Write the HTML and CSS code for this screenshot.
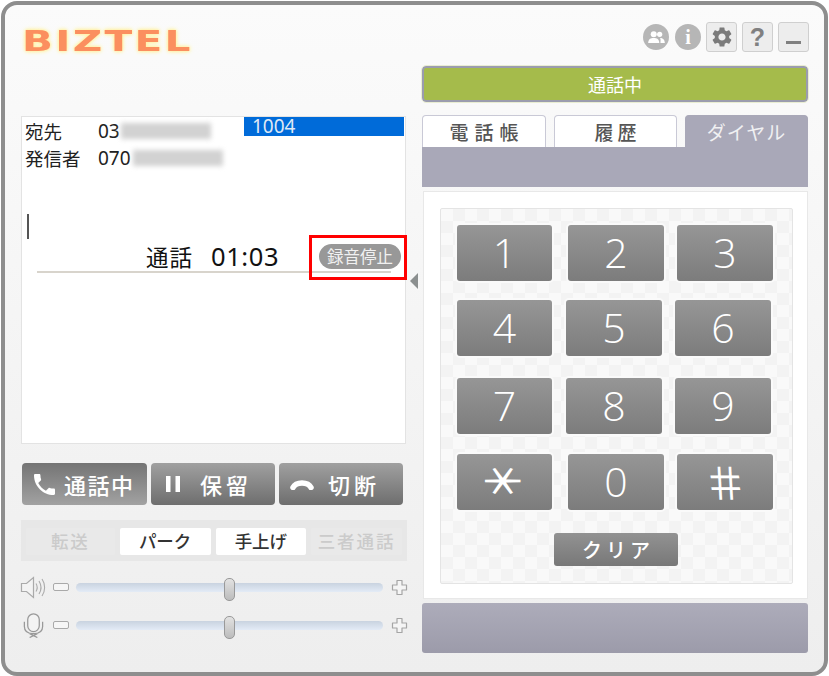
FILE: index.html
```html
<!DOCTYPE html>
<html lang="ja">
<head>
<meta charset="utf-8">
<title>BIZTEL</title>
<link rel="stylesheet" href="styles.css">
</head>
<body>
<div class="window">
  <div class="left">
    <div class="logo">BIZTEL</div>
    <div class="call-panel">
      <div class="info-row first">
        <div class="info-text"><span class="label">宛先</span><span class="num">03</span><span class="blur b1"></span></div>
        <div class="ext">1004</div>
      </div>
      <div class="info-row">
        <div class="info-text"><span class="label">発信者</span><span class="num">070</span><span class="blur b2"></span></div>
      </div>
      <div class="cursor"></div>
      <div class="call-row">
        <span class="call-state">通話</span><span class="call-time">01:03</span>
        <span class="rec">録音停止</span>
      </div>
      <div class="call-line"></div>
      <div class="red-box"></div>
    </div>
    <div class="actions">
      <div class="act active"><svg class="ic-phone" viewBox="3 3 18 18"><path d="M6.62 10.79c1.44 2.83 3.76 5.14 6.59 6.59l2.2-2.2c.27-.27.67-.36 1.02-.24 1.12.37 2.33.57 3.57.57.55 0 1 .45 1 1V20c0 .55-.45 1-1 1-9.39 0-17-7.61-17-17 0-.55.45-1 1-1h3.5c.55 0 1 .45 1 1 0 1.25.2 2.45.57 3.57.11.35.03.74-.25 1.02l-2.2 2.2z"/></svg><span>通話中</span></div>
      <div class="act hold"><svg class="ic-pause" viewBox="0 0 14 16"><rect x="0" y="0" width="4.500" height="16"/><rect x="9.500" y="0" width="4.500" height="16"/></svg><span class="wide">保留</span></div>
      <div class="act hang"><svg class="ic-hang" viewBox="0 0 24 11"><path d="M3 8.500C6 2.500 18 2.500 21 8.500" fill="none" stroke="#fff" stroke-width="5.500" stroke-linecap="round"/></svg><span class="wide">切断</span></div>
    </div>
    <div class="tools">
      <div class="tool off first-tool">転送</div>
      <div class="tool on">パーク</div>
      <div class="tool on">手上げ</div>
      <div class="tool off">三者通話</div>
    </div>
    <div class="slider-row">
      <svg class="vol-ic" viewBox="0 0 27 24"><path d="M1.500 8h5l7-6v20l-7-6h-5z" fill="#f3f3f3" stroke="#aaa" stroke-width="1.200"/><path d="M16 8c1.500 2.500 1.500 5.500 0 8M19 5.500c2.500 4 2.500 9 0 13M22 3.500c3.500 5 3.500 12 0 17" fill="none" stroke="#aaa" stroke-width="1.100"/></svg>
      <div class="minus"></div>
      <div class="track"><div class="thumb"></div></div>
      <svg class="plus" viewBox="0 0 17 17"><path d="M6 1.500h5v4.500h4.500v5H11v4.500H6V11H1.500V6H6z" fill="#f5f5f5" stroke="#a5a5a5" stroke-width="1.200" stroke-linejoin="round"/></svg>
    </div>
    <div class="slider-row">
      <svg class="vol-ic" viewBox="0 0 27 26"><rect x="7.500" y="0.800" width="12" height="18.500" rx="6" fill="#f3f3f3" stroke="#999" stroke-width="1.300"/><path d="M4 9v5c0 5 4 7.500 9.500 7.500S23 19 23 14V9M9.500 25.500l8-4M17.500 25.500l-8-4" fill="none" stroke="#999" stroke-width="1.300"/></svg>
      <div class="minus"></div>
      <div class="track"><div class="thumb"></div></div>
      <svg class="plus" viewBox="0 0 17 17"><path d="M6 1.500h5v4.500h4.500v5H11v4.500H6V11H1.500V6H6z" fill="#f5f5f5" stroke="#a5a5a5" stroke-width="1.200" stroke-linejoin="round"/></svg>
    </div>
  </div>
  <div class="right">
    <div class="top-icons">
      <div class="circle"><svg viewBox="0 0 24 24"><circle cx="8.500" cy="8" r="3.800" fill="#fff"/><circle cx="16" cy="8" r="3.300" fill="#fff"/><path d="M1.500 19c0-5 3-6.500 7-6.500s7 1.500 7 6.500z" fill="#fff"/><path d="M17 19h5.500c0-4.500-2.500-6.500-6-6.500 1 1.500.5 4 .5 6.500z" fill="#fff"/></svg></div>
      <div class="circle info">i</div>
      <div class="square first"><svg viewBox="0 0 24 24"><path fill="#7b7b7b" d="M19.140 12.940c.04-.3.06-.61.06-.94 0-.32-.02-.64-.07-.94l2.030-1.580a.49.49 0 0 0 .12-.61l-1.920-3.320a.488.488 0 0 0-.59-.22l-2.390.96c-.5-.38-1.030-.7-1.620-.94l-.36-2.540a.484.484 0 0 0-.48-.41h-3.840c-.24 0-.43.17-.47.41l-.36 2.540c-.59.24-1.130.57-1.620.94l-2.390-.96c-.22-.08-.47 0-.59.22L2.740 8.870c-.12.21-.08.47.12.61l2.030 1.580c-.05.3-.09.63-.09.94s.02.64.07.94l-2.030 1.580a.49.49 0 0 0-.12.61l1.920 3.320c.12.22.37.29.59.22l2.390-.96c.5.38 1.030.7 1.620.94l.36 2.540c.05.24.24.41.48.41h3.840c.24 0 .44-.17.47-.41l.36-2.540c.59-.24 1.130-.56 1.620-.94l2.390.96c.22.08.47 0 .59-.22l1.920-3.320c.12-.22.07-.47-.12-.61l-2.010-1.580zM12 15.600c-1.980 0-3.600-1.620-3.600-3.600s1.620-3.600 3.600-3.600 3.600 1.620 3.600 3.600-1.620 3.600-3.600 3.600z"/></svg></div>
      <div class="square help">?</div>
      <div class="square"><div class="dash"></div></div>
    </div>
    <div class="status">通話中</div>
    <div class="tabs">
      <div class="tab sp1">電話帳</div>
      <div class="tab sp2">履歴</div>
      <div class="tab sel">ダイヤル</div>
    </div>
    <div class="tab-band"></div>
    <div class="dial-panel">
      <div class="keypad">
        <div class="key-row"><div class="key">1</div><div class="key mid-a">2</div><div class="key">3</div></div>
        <div class="key-row r2"><div class="key">4</div><div class="key">5</div><div class="key">6</div></div>
        <div class="key-row r3"><div class="key">7</div><div class="key">8</div><div class="key">9</div></div>
        <div class="key-row r4"><div class="key"><span class="star">＊</span></div><div class="key mid-a">0</div><div class="key"><span class="hash">＃</span></div></div>
        <div class="clear">クリア</div>
      </div>
    </div>
    <div class="footer-band"></div>
  </div>
  <div class="handle"></div>
</div>
</body>
</html>
```
FILE: styles.css
```css
* { box-sizing: border-box; }
html, body { margin: 0; padding: 0; background: #fff; }
body { width: 829px; height: 676px; overflow: hidden; font-family: "Noto Sans CJK JP", "Noto Sans", sans-serif; }

.window {
  position: relative;
  display: flex;
  gap: 16px;
  width: 827px;
  height: 675px;
  margin: 1px 0 0 1px;
  padding-left: 16px;
  border: 4px solid #8e8e8e;
  border-radius: 16px;
  background: linear-gradient(#fbfbfb, #eeeeee);
}

.left { width: 385px; flex: none; }
.right { width: 387px; flex: none; }

.logo {
  height: 28px;
  margin-top: 23px;
  margin-bottom: 60px;
  margin-left: 1px;
  font-family: "DejaVu Sans", sans-serif;
  font-weight: 700;
  font-size: 28px;
  line-height: 28px;
  letter-spacing: 1.600px;
  color: #fb8f5f;
  text-shadow: 0 0 2px #fff3b0, 0 0 3px #fff0a0, 0 0 4px #fff0a0;
  transform: scaleX(1.45);
  transform-origin: left center;
}

.call-panel {
  position: relative;
  height: 328px;
  background: #fff;
  border: 1px solid #e3e3e3;
  color: #222;
}
.info-row { display: flex; height: 24px; font-size: 18.500px; line-height: 24px; }
.info-row.first { height: 28px; }
.info-row.first .info-text { padding-top: 3px; }
.info-text { width: 222px; flex: none; display: flex; align-items: center; height: 25px; padding-left: 3px; }
.label { width: 73px; flex: none; }
.num { font-family: "Noto Sans", sans-serif; font-size: 19px; }
.blur { display: block; height: 16px; background: #d2d2d2; filter: blur(2.500px); }
.b1 { width: 90px; margin-left: 1px; }
.b2 { width: 90px; margin-left: 2px; }
.ext {
  flex: 1;
  height: 19px;
  margin-right: 1px;
  padding-left: 8px;
  background: #006bd9;
  color: #dfe8f5;
  font-family: "Noto Sans", sans-serif;
  font-size: 19px;
  line-height: 19px;
}
.cursor { width: 2px; height: 25px; margin: 45px 0 0 5px; background: #555; }
.call-row { display: flex; align-items: center; height: 25px; margin-top: 5px; padding-left: 124px; padding-bottom: 2px; color: #111; font-size: 22.500px; }
.call-state { width: 65px; flex: none; letter-spacing: 1px; }
.call-time { width: 108px; flex: none; font-family: "Noto Sans", sans-serif; font-size: 25.500px; letter-spacing: .6px; }
.rec {
  width: 82px;
  height: 25px;
  margin-top: 2px;
  border-radius: 13px;
  background: #989898;
  color: #f1f1f1;
  font-size: 16.500px;
  line-height: 25px;
  text-align: center;
}
.call-line { height: 2px; margin: 2px 14px 0 15px; background: #d8d4cc; }
.red-box { position: absolute; left: 287px; top: 118px; width: 98px; height: 45px; border: 3px solid #f00; }

.actions { display: flex; gap: 4px; margin-top: 19px; margin-left: 1px; height: 42px; }
.act {
  width: 124px;
  display: flex;
  align-items: center;
  border-radius: 4px;
  background: linear-gradient(#a0a0a0, #6e6e6e);
  color: #fff;
  font-size: 22px;
  font-weight: 500;
  letter-spacing: 1.500px;
}
.act.active { width: 125px; padding-left: 12px; gap: 9px; background: linear-gradient(#747474, #a2a2a2); }
.act.hold { padding-left: 15px; gap: 20px; }
.act.hang { padding-left: 11px; gap: 14px; }
.act svg { fill: #fff; flex: none; }
.ic-phone { width: 21px; height: 21px; }
.ic-pause { width: 14px; height: 16px; }
.ic-hang { width: 24px; height: 11px; }
.wide { letter-spacing: 4px; }

.tools {
  display: flex;
  gap: 5px;
  height: 41px;
  margin-top: 15px;
  width: 386px;
  padding: 8px 5px 6px;
  background: #e7e7e7;
  font-size: 17.500px;
  font-weight: 500;
}
.tool { width: 91px; height: 27px; line-height: 26px; text-align: center; border-radius: 2px; }
.tool.first-tool { width: 89px; }
.tool.on { background: #fff; color: #333; }
.tool.off { background: #e9e9e9; color: #cbcbcb; letter-spacing: 2px; }

.slider-row { display: flex; align-items: center; height: 24px; margin-top: 14px; margin-left: -1px; }
.tools + .slider-row { margin-top: 14px; }
.vol-ic { width: 27px; height: 25px; flex: none; }
.minus { width: 16px; height: 8px; margin-left: 6px; border: 1px solid #a9a9a9; border-radius: 2px; background: #f6f6f6; flex: none; }
.track {
  position: relative;
  width: 307px;
  height: 9px;
  margin-left: 7px;
  border-radius: 5px;
  background: linear-gradient(#c9d3e0, #e3ebf6);
  flex: none;
}
.thumb {
  position: absolute;
  left: 148px;
  top: -5px;
  width: 11px;
  height: 23px;
  border: 1px solid #999;
  border-radius: 5px;
  background: linear-gradient(#e2e2e2, #bcbcbc);
}
.plus { width: 17px; height: 17px; margin-left: 8px; flex: none; }

.top-icons { display: flex; align-items: center; height: 30px; margin-top: 17px; padding-left: 221px; color: #fff; }
.circle { width: 26px; height: 26px; margin-right: 6px; border-radius: 50%; background: #b6b6b6; display: flex; align-items: center; justify-content: center; flex: none; }
.circle svg { width: 19px; height: 19px; }
.circle.info { margin-right: 0; font-family: "Liberation Serif", serif; font-weight: 700; font-size: 20px; line-height: 26px; }
.square { width: 31px; height: 30px; margin-left: 5px; border: 1px solid #cfcfcf; border-radius: 3px; background: #ededed; display: flex; align-items: center; justify-content: center; flex: none; }
.square svg { width: 24px; height: 24px; }
.square.help { font-family: "Liberation Sans", sans-serif; font-weight: 700; font-size: 25px; color: #808080; }
.dash { width: 15px; height: 3px; margin-top: 10px; background: #808080; }

.status {
  height: 36px;
  width: 386px;
  margin-top: 14px;
  border: 2px solid #9b9cae;
  outline: 1px solid #e9edd2;
  border-radius: 4px;
  background: #a5bb4b;
  color: #fff;
  font-size: 18px;
  line-height: 32px;
  text-align: center;
}

.tabs { display: flex; gap: 8px; height: 32px; margin-top: 13px; }
.tab {
  width: 123px;
  border: 1px solid #c9c9d6;
  border-bottom: 0;
  border-radius: 4px 4px 0 0;
  background: #fff;
  color: #555;
  font-size: 19px;
  font-weight: 500;
  line-height: 32px;
  text-align: center;
}
.sp1 { width: 124px; letter-spacing: 6px; padding-left: 6px; }
.sp2 { letter-spacing: 4px; padding-left: 4px; }
.tab.sel { background: #a9a8b8; border-color: #a9a8b8; color: #f0f0f2; font-weight: 400; letter-spacing: 1px; line-height: 31px; }
.tab-band { height: 40px; width: 386px; background: #a9a8b8; }

.dial-panel { height: 408px; width: 385px; margin: 4px 0 0 1px; padding: 16px 0 0 16px; border: 1px solid #e8e8e8; background: #fff; }
.keypad {
  width: 353px;
  height: 376px;
  padding: 16px 16px 0;
  border: 1px solid #e4e4e4;
  border-radius: 2px;
  background: repeating-conic-gradient(#f3f3f3 0 25%, #f9f9f9 0 50%) 0 0 / 24px 24px;
}
.key-row { display: flex; gap: 14px; height: 56px; }
.r2 { margin-top: 19px; }
.r3 { margin-top: 22px; }
.r4 { margin-top: 20px; }
.key {
  width: 96px;
  height: 56px;
  display: flex;
  align-items: center;
  justify-content: center;
  padding-bottom: 3px;
  border-radius: 3px;
  background: linear-gradient(#969696, #7c7c7c);
  box-shadow: 0 0 0 2px #fafafa;
  color: #fff;
  font-family: "Open Sans", sans-serif;
  font-weight: 300;
  font-size: 41px;
}
.key:first-child { width: 95px; }
.key + .key { margin-right: -1px; }
.mid-a { margin-left: 2px; margin-right: -1px; }
.star { display: block; font-family: "Noto Sans CJK JP", sans-serif; font-weight: 500; font-size: 44px; line-height: 1; transform: rotate(90deg) scale(.85, 1.05); }
.hash { display: block; font-family: "Noto Sans CJK JP", sans-serif; font-weight: 400; font-size: 44px; line-height: 1; transform: skewX(10deg); }
.clear {
  width: 124px;
  height: 33px;
  margin: 23px 0 0 97px;
  padding-left: 4px;
  border-radius: 3px;
  background: linear-gradient(#929292, #787878);
  color: #fff;
  font-size: 20px;
  font-weight: 500;
  letter-spacing: 4px;
  line-height: 33px;
  text-align: center;
}
.footer-band { height: 50px; width: 386px; margin-top: 4px; border-radius: 3px; background: linear-gradient(#adacba, #9c9baa); }

.handle {
  position: absolute;
  left: 405px;
  top: 268px;
  width: 0;
  height: 0;
  border-top: 8px solid transparent;
  border-bottom: 8px solid transparent;
  border-right: 8px solid #8b8f8f;
}
```
